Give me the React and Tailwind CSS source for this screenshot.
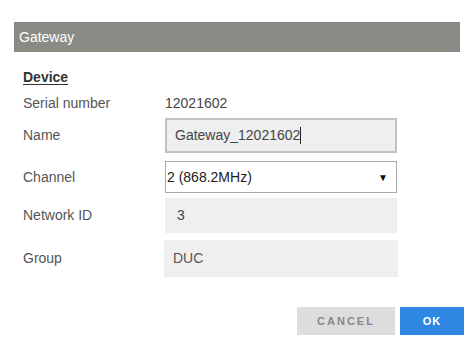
const Row = ({ label, children, className }) => (
  <div className={`flex items-center ${className}`}>
    <div className="w-[142px] shrink-0 text-[14px] text-[#555]">{label}</div>
    {children}
  </div>
);

export default function App() {
  return (
    <div
      className="w-[474px] h-[345px] bg-white overflow-hidden"
      style={{ fontFamily: '"Liberation Sans", Arial, sans-serif' }}
    >
      {/* Title bar */}
      <div className="mt-[22px] mx-[14px] h-[30px] bg-[#8b8b86] pl-[5px] flex items-center text-[14px] text-white">
        Gateway
      </div>

      <div className="pl-[23px]">
        <div className="mt-[17px] h-[16px] leading-[16px] text-[14px] font-bold text-[#333] underline underline-offset-2">
          Device
        </div>

        <Row label="Serial number" className="mt-[9px] h-[18px]">
          <span className="text-[14px] text-[#444]">12021602</span>
        </Row>

        <Row label="Name" className="mt-[6px] h-[35px]">
          <div className="w-[232px] h-[35px] bg-[#efefef] border-2 border-[#c2c2c2] pl-[8px] flex items-center text-[14px] text-[#444]">
            Gateway_12021602
            <span className="inline-block w-px h-[17px] bg-[#222]" />
          </div>
        </Row>

        <Row label="Channel" className="mt-[8px] h-[32px]">
          <div className="w-[232px] h-[32px] bg-white border border-[#a9a9a9] pl-[1px] pr-[8px] flex items-center justify-between text-[14px] text-[#222]">
            <span>2 (868.2MHz)</span>
            <span className="text-[10px] text-[#111]">▼</span>
          </div>
        </Row>

        <Row label="Network ID" className="mt-[5px] h-[35px]">
          <div className="w-[232px] h-[35px] bg-[#efefef] pl-[12px] flex items-center text-[14px] text-[#444]">
            3
          </div>
        </Row>

        <Row label="Group" className="mt-[7px] h-[37px]">
          <div className="-ml-[1px] w-[234px] h-[37px] bg-[#efefef] pl-[9px] flex items-center text-[14px] text-[#555]">
            DUC
          </div>
        </Row>
      </div>

      <div className="mt-[30px] pr-[10px] flex justify-end gap-[5px]">
        <button className="w-[98px] h-[28px] bg-[#dddddd] text-[11px] font-bold tracking-[2px] text-[#888]">
          CANCEL
        </button>
        <button className="w-[64px] h-[28px] bg-[#2e88e3] text-[11px] font-bold tracking-[1px] text-white">
          OK
        </button>
      </div>
    </div>
  );
}
